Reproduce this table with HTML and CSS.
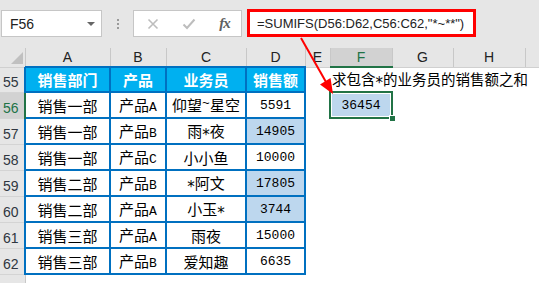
FILE: index.html
```html
<!DOCTYPE html>
<html lang="zh-CN">
<head>
<meta charset="utf-8">
<title>SUMIFS</title>
<link rel="stylesheet" href="styles.css">
</head>
<body>
<div class="fbar">
  <div class="namebox"><span>F56</span><span class="caret"></span></div>
  <div class="dots"><i></i><i></i><i></i></div>
  <div class="btns">
    <svg class="ic" width="12" height="12" viewBox="0 0 12 12"><path d="M1.5 1.5 L10.5 10.5 M10.5 1.5 L1.5 10.5" stroke="#bdbdbd" stroke-width="1.6" fill="none"/></svg>
    <svg class="ic" width="14" height="12" viewBox="0 0 14 12"><path d="M1.5 6.5 L5 10 L12.5 1.5" stroke="#bdbdbd" stroke-width="2" fill="none"/></svg>
    <span class="fx">fx</span>
  </div>
  <div class="formula">=SUMIFS(D56:D62,C56:C62,"*~**")</div>
</div>
<table class="sheet">
  <colgroup>
    <col class="c-rh"><col class="c-a"><col class="c-b"><col class="c-c"><col class="c-d"><col class="c-e"><col class="c-f"><col class="c-g"><col class="c-h"><col class="c-i">
  </colgroup>
  <tr class="hdr">
    <th class="corner"><span class="tri"></span></th>
    <th>A</th><th>B</th><th>C</th><th>D</th><th>E</th><th class="hsel">F</th><th>G</th><th>H</th><th></th>
  </tr>
  <tr class="r55">
    <th class="rh">55</th>
    <td class="t thd">销售部门</td><td class="t thd">产品</td><td class="t thd">业务员</td><td class="t thd">销售额</td>
    <td></td><td class="note" colspan="4">求包含<span class="ast">*</span>的业务员的销售额之和</td>
  </tr>
  <tr class="r">
    <th class="rh rsel">56</th>
    <td class="t">销售一部</td><td class="t">产品<span class="h">A</span></td><td class="t">仰望<span class="h tl">~</span>星空</td><td class="t n">5591</td>
    <td></td><td class="sel n">36454<i class="handle"></i></td><td></td><td></td><td></td>
  </tr>
  <tr class="r">
    <th class="rh">57</th>
    <td class="t">销售一部</td><td class="t">产品<span class="h">B</span></td><td class="t">雨<span class="ast">*</span>夜</td><td class="t n hl">14905</td>
    <td></td><td></td><td></td><td></td><td></td>
  </tr>
  <tr class="r">
    <th class="rh">58</th>
    <td class="t">销售一部</td><td class="t">产品<span class="h">C</span></td><td class="t">小小鱼</td><td class="t n">10000</td>
    <td></td><td></td><td></td><td></td><td></td>
  </tr>
  <tr class="r">
    <th class="rh">59</th>
    <td class="t">销售二部</td><td class="t">产品<span class="h">B</span></td><td class="t"><span class="ast">*</span>阿文</td><td class="t n hl">17805</td>
    <td></td><td></td><td></td><td></td><td></td>
  </tr>
  <tr class="r">
    <th class="rh">60</th>
    <td class="t">销售二部</td><td class="t">产品<span class="h">A</span></td><td class="t">小玉<span class="ast">*</span></td><td class="t n hl">3744</td>
    <td></td><td></td><td></td><td></td><td></td>
  </tr>
  <tr class="r">
    <th class="rh">61</th>
    <td class="t">销售三部</td><td class="t">产品<span class="h">A</span></td><td class="t">雨夜</td><td class="t n">15000</td>
    <td></td><td></td><td></td><td></td><td></td>
  </tr>
  <tr class="r">
    <th class="rh">62</th>
    <td class="t">销售三部</td><td class="t">产品<span class="h">B</span></td><td class="t">爱知趣</td><td class="t n">6635</td>
    <td></td><td></td><td></td><td></td><td></td>
  </tr>
  <tr class="r">
    <th class="rh"></th>
    <td colspan="9"></td>
  </tr>
</table>
<svg class="arrow" width="539" height="283" viewBox="0 0 539 283">
  <line x1="301" y1="38" x2="326" y2="82" stroke="#ff0000" stroke-width="2"/>
  <polygon points="333,94 320,84.5 330.5,78" fill="#ff0000"/>
</svg>
</body>
</html>
```
FILE: styles.css
```css
* { box-sizing: border-box; }
html, body { margin: 0; padding: 0; }
body {
  width: 539px;
  height: 283px;
  overflow: hidden;
  background: #fff;
  position: relative;
  font-family: "Liberation Sans", Arial, sans-serif;
}

/* formula bar */
.fbar {
  height: 48px;
  background: #e6e6e6;
  display: flex;
  align-items: flex-start;
  padding: 10px 0 0 1px;
}
.namebox {
  width: 101px;
  height: 27px;
  background: #fff;
  border: 1px solid #c6c6c6;
  display: flex;
  align-items: center;
  justify-content: space-between;
  padding: 0 6px 0 8px;
  font-size: 14px;
  color: #222;
}
.caret {
  width: 0; height: 0;
  border-left: 4px solid transparent;
  border-right: 4px solid transparent;
  border-top: 4px solid #666;
}
.dots {
  margin: 9px 0 0 15px;
  display: flex;
  flex-direction: column;
  gap: 2px;
}
.dots i { display: block; width: 2px; height: 2px; background: #9a9a9a; }
.btns {
  margin-left: 14px;
  width: 109px;
  height: 27px;
  background: #fff;
  border: 1px solid #c6c6c6;
  display: grid;
  grid-template-columns: 37px 36px 35px;
  align-items: center;
  justify-items: center;
}
.ic { display: block; }
.fx {
  font-family: "Liberation Serif", serif;
  font-style: italic;
  font-weight: bold;
  font-size: 15px;
  color: #606060;
  letter-spacing: -1px;
}
.formula {
  margin: -1px 0 0 5px;
  width: 229px;
  height: 28px;
  border: 3px solid #ff0000;
  background: #fff;
  font-size: 13px;
  padding-left: 7px;
  display: flex;
  align-items: center;
  color: #222;
  white-space: nowrap;
}

/* sheet */
.sheet {
  border-collapse: collapse;
  table-layout: fixed;
  width: 565px;
}
.c-rh { width: 25px; }
.c-a { width: 85px; }
.c-b { width: 56px; }
.c-c { width: 80px; }
.c-d { width: 59px; }
.c-e { width: 25px; }
.c-f { width: 62px; }
.c-g { width: 61px; }
.c-h { width: 72px; }
.c-i { width: 40px; }
.sheet th, .sheet td { padding: 0; }

.hdr { height: 19px; }
.hdr th {
  background: #e6e6e6;
  border-right: 1px solid #c8c8c8;
  border-bottom: 1px solid #d0d0d0;
  font-weight: normal;
  font-size: 14px;
  color: #222;
  text-align: center;
  vertical-align: middle;
}
.hdr th.hsel {
  background: #d2d2d2;
  border-bottom: 2px solid #217346;
  color: #217346;
}
.corner { position: relative; }
.tri {
  position: absolute;
  right: 2px;
  bottom: 3px;
  width: 0; height: 0;
  border-left: 12px solid transparent;
  border-bottom: 12px solid #c0c0c0;
}

.r55 { height: 25px; }
.r { height: 26px; }

.rh {
  background: #e6e6e6;
  border-right: 1px solid #c8c8c8;
  border-bottom: 1px solid #d4d4d4;
  font-weight: normal;
  font-size: 14px;
  color: #2f3640;
  text-align: left;
  padding-left: 3px !important;
  vertical-align: bottom;
  padding-bottom: 3px !important;
  line-height: 1;
}
.rh.rsel {
  background: #d2d2d2;
  border-right: 2px solid #217346;
  color: #217346;
}

.t {
  border: 2px solid #0070c0;
  text-align: center;
  vertical-align: middle;
  font-family: "Noto Sans CJK SC", sans-serif;
  font-size: 15px;
  line-height: 1;
  color: #000;
  white-space: nowrap;
}
.thd {
  background: #00b0f0;
  color: #fff;
  font-weight: bold;
}
.hl { background: #bdd7ee; }
.n, .h {
  font-family: "Liberation Mono", monospace;
  font-size: 13px;
}
.tl {
  position: relative;
  top: -4px;
}
.ast {
  font-family: "DejaVu Sans", sans-serif;
  font-size: 15px;
  position: relative;
  top: 3px;
}
.note {
  font-family: "Noto Sans CJK SC", sans-serif;
  font-size: 14.5px;
  line-height: 1;
  white-space: nowrap;
  text-align: left;
  padding-left: 2px !important;
  color: #000;
  vertical-align: middle;
}
.sel {
  position: relative;
  background: #bdd7ee;
  text-align: center;
  vertical-align: middle;
  line-height: 1;
  color: #000;
}
.sel::before {
  content: "";
  position: absolute;
  top: -1px; left: -1px; right: -1px; bottom: -1px;
  border: 2px solid #217346;
  box-shadow: inset 0 0 0 1px #fff;
}
.handle {
  position: absolute;
  right: -4px;
  bottom: -4px;
  width: 7px;
  height: 7px;
  background: #217346;
  border: 1px solid #fff;
}

.arrow {
  position: absolute;
  left: 0;
  top: 0;
  pointer-events: none;
}
```
